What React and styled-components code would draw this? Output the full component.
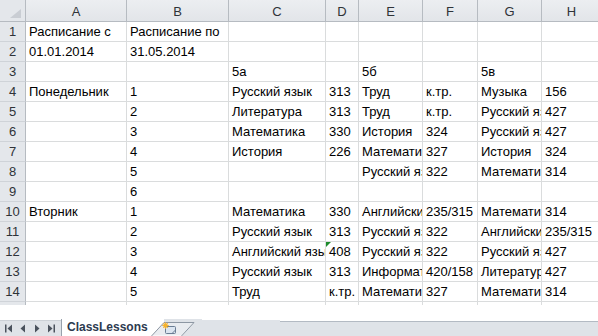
import React from 'react';
import styled, { createGlobalStyle } from 'styled-components';

const GlobalStyle = createGlobalStyle`
  html, body {
    margin: 0;
    padding: 0;
    background: #ffffff;
  }
`;

const COLUMNS = ['A', 'B', 'C', 'D', 'E', 'F', 'G', 'H'];

const ROWS = [
    ['Расписание с', 'Расписание по', '', '', '', '', '', ''],
    ['01.01.2014', '31.05.2014', '', '', '', '', '', ''],
    ['', '', '5а', '', '5б', '', '5в', ''],
    ['Понедельник', '1', 'Русский язык', '313', 'Труд', 'к.тр.', 'Музыка', '156'],
    ['', '2', 'Литература', '313', 'Труд', 'к.тр.', 'Русский язык', '427'],
    ['', '3', 'Математика', '330', 'История', '324', 'Русский язык', '427'],
    ['', '4', 'История', '226', 'Математика', '327', 'История', '324'],
    ['', '5', '', '', 'Русский язык', '322', 'Математика', '314'],
    ['', '6', '', '', '', '', '', ''],
    ['Вторник', '1', 'Математика', '330', 'Английский язык', '235/315', 'Математика', '314'],
    ['', '2', 'Русский язык', '313', 'Русский язык', '322', 'Английский язык', '235/315'],
    ['', '3', 'Английский язык', '408', 'Русский язык', '322', 'Русский язык', '427'],
    ['', '4', 'Русский язык', '313', 'Информатика', '420/158', 'Литература', '427'],
    ['', '5', 'Труд', 'к.тр.', 'Математика', '327', 'Математика', '314'],
];

// ячейки, сохранённые как текст (зелёный уголок)
const FLAGGED = { '12D': true };

const Window = styled.div`
    width: 598px;
    height: 336px;
    overflow: hidden;
    display: flex;
    flex-direction: column;
    background: #ffffff;
    font-family: "Liberation Sans", Arial, sans-serif;
`;

const Sheet = styled.div`
    display: grid;
    grid-template-columns: 26px 101px 102px 97px 33px 64px 55px 64px 60px;
    grid-template-rows: 22px repeat(14, 20px) 3px;
    flex: none;
`;

const Corner = styled.div`
    position: relative;
    background: #e4e7eb;
    border-right: 1px solid #b6bbc1;
    border-bottom: 1px solid #b6bbc1;

    &::after {
        content: '';
        position: absolute;
        right: 4px;
        bottom: 3px;
        border-left: 11px solid transparent;
        border-bottom: 9px solid #c9cdd3;
    }
`;

const ColHead = styled.div`
    background: linear-gradient(#eceef1, #e2e5e9);
    border-right: 1px solid #b6bbc1;
    border-bottom: 1px solid #b6bbc1;
    color: #2f3338;
    font-size: 13px;
    display: flex;
    align-items: center;
    justify-content: center;
    padding-top: 1px;
`;

const RowHead = styled.div`
    background: #e4e7eb;
    border-right: 1px solid #b6bbc1;
    border-bottom: 1px solid #cfd3d8;
    color: #2f3338;
    font-size: 13px;
    display: flex;
    align-items: center;
    justify-content: center;
`;

const Cell = styled.div`
    position: relative;
    border-right: 1px solid #dadcdd;
    border-bottom: 1px solid #dadcdd;
    padding: 0 2px 0 3px;
    font-size: 13px;
    line-height: 19px;
    color: #000000;
    white-space: nowrap;
    overflow: hidden;
`;

const Stub = styled.div`
    background: ${p => (p.$head ? '#e4e7eb' : '#ffffff')};
    border-right: 1px solid ${p => (p.$head ? '#b6bbc1' : '#dadcdd')};
`;

const Flag = styled.span`
    position: absolute;
    left: 0;
    top: 0;
    border-top: 5px solid #1e8c2c;
    border-right: 5px solid transparent;
`;

const Gap = styled.div`
    height: 14px;
    flex: none;
`;

const TabBar = styled.div`
    height: 17px;
    display: flex;
    flex: none;
`;

const NavGroup = styled.div`
    width: 61px;
    margin-top: 1px;
    background: #dfe3e8;
    border-top: 1px solid #ccd1d7;
    display: flex;
    align-items: center;
    gap: 6px;
    padding-left: 5px;
    box-sizing: border-box;

    svg {
        display: block;
    }
`;

const ActiveTab = styled.div`
    background: #ffffff;
    border-left: 1px solid #98a1ac;
    padding: 0 2px 0 5px;
    font-size: 12px;
    font-weight: bold;
    color: #2c3a4f;
    line-height: 17px;
`;

const TabEdge = styled.svg`
    display: block;
    flex: none;
`;

const TabFill = styled.div`
    width: 78px;
    margin-top: 1px;
    background: #dfe3e8;
`;

const ScrollTrack = styled.div`
    flex: 1;
    margin-top: 2px;
    background: #dfe3e8;
    border-top: 1px solid #b3bac3;
`;

const NavIcon = ({ kind }) => {
    const fill = '#4a525d';
    return (
        <svg width="8" height="9" viewBox="0 0 8 9">
            {kind === 'first' && (
                <>
                    <rect x="0" y="0.5" width="1.5" height="8" fill={fill} />
                    <polygon points="7,0.5 2.5,4.5 7,8.5" fill={fill} />
                </>
            )}
            {kind === 'prev' && <polygon points="6,0.5 1.5,4.5 6,8.5" fill={fill} />}
            {kind === 'next' && <polygon points="2,0.5 6.5,4.5 2,8.5" fill={fill} />}
            {kind === 'last' && (
                <>
                    <polygon points="1,0.5 5.5,4.5 1,8.5" fill={fill} />
                    <rect x="6.5" y="0.5" width="1.5" height="8" fill={fill} />
                </>
            )}
        </svg>
    );
};

// правый скос активного листа + вкладка «вставить лист»
const InsertSheetTab = () => (
    <TabEdge width="52" height="17" viewBox="0 0 52 17">
        <polygon points="0,0 14,0 14,3.5 2,16.5 0,17" fill="#ffffff" />
        <polygon points="14,0 52,0 52,17 32,17 44,3.5 14,3.5" fill="#dfe3e8" />
        <polygon points="2,16.5 14,3.5 44,3.5 32,16.5" fill="#e9ecf0" />
        <polyline points="1.5,17 14,3.5 44,3.5 31.5,17" stroke="#8d97a3" fill="none" strokeWidth="1" />
        <rect x="15.5" y="7.5" width="10" height="7" rx="1" fill="#dbe5f0" stroke="#6a7d94" />
        <path d="M22 14.5 L25.5 11" stroke="#6a7d94" fill="none" />
        <circle cx="15.5" cy="6.5" r="2.2" fill="#f2a51c" />
        <path d="M15.5 3 V10 M12 6.5 H19 M13 4 L18 9 M18 4 L13 9" stroke="#f6b530" strokeWidth="0.8" />
    </TabEdge>
);

const App = () => {
    return (
        <>
            <GlobalStyle />
            <Window>
                <Sheet>
                    <Corner />
                    {COLUMNS.map(c => (
                        <ColHead key={c}>{c}</ColHead>
                    ))}
                    {ROWS.map((row, i) => (
                        <React.Fragment key={i}>
                            <RowHead>{i + 1}</RowHead>
                            {row.map((value, j) => (
                                <Cell key={j}>
                                    {FLAGGED[`${i + 1}${COLUMNS[j]}`] && <Flag />}
                                    {value}
                                </Cell>
                            ))}
                        </React.Fragment>
                    ))}
                    <Stub $head />
                    {COLUMNS.map(c => (
                        <Stub key={c} />
                    ))}
                </Sheet>
                <Gap />
                <TabBar>
                    <NavGroup>
                        <NavIcon kind="first" />
                        <NavIcon kind="prev" />
                        <NavIcon kind="next" />
                        <NavIcon kind="last" />
                    </NavGroup>
                    <ActiveTab>ClassLessons</ActiveTab>
                    <InsertSheetTab />
                    <TabFill />
                    <ScrollTrack />
                </TabBar>
            </Window>
        </>
    );
};

export default App;
